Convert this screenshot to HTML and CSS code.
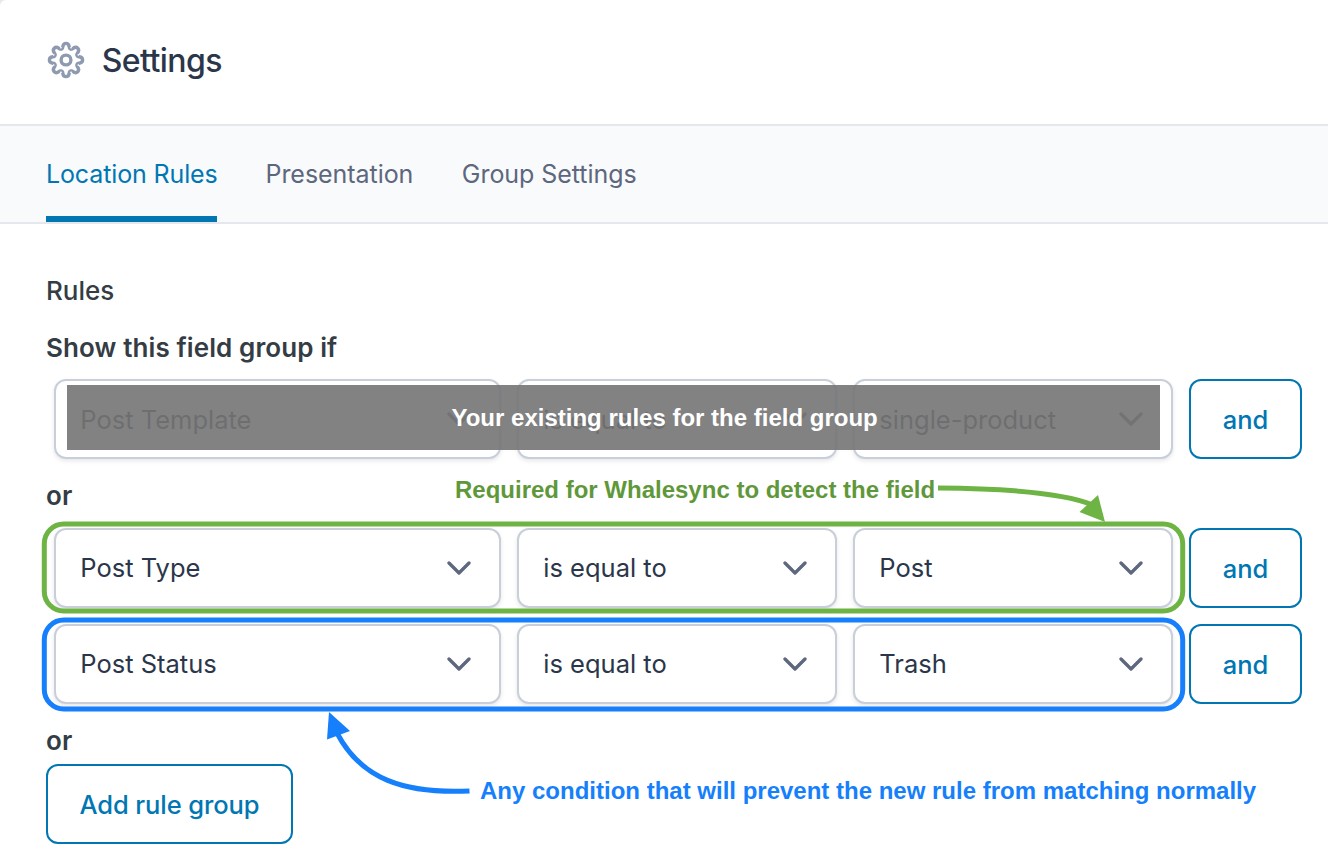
FILE: index.html
```
<!DOCTYPE html>
<html lang="en">
<head>
<meta charset="utf-8">
<title>Settings</title>
<link rel="stylesheet" href="styles.css">
</head>
<body>
<main class="panel">
  <header class="panel-head">
    <svg class="gear" viewBox="-20 -20 40 40" aria-hidden="true">
      <defs><path id="tooth" d="M-4.7 -11.35C-3.9 -11 -3.4 -11.8 -3.2 -13.2C-2.9 -15.4 -1.8 -16.6 0 -16.6C1.8 -16.6 2.9 -15.4 3.2 -13.2C3.4 -11.800 3.9 -11 4.7 -11.35"/></defs>
      <use href="#tooth"/><use href="#tooth" transform="rotate(45)"/><use href="#tooth" transform="rotate(90)"/><use href="#tooth" transform="rotate(135)"/><use href="#tooth" transform="rotate(180)"/><use href="#tooth" transform="rotate(225)"/><use href="#tooth" transform="rotate(270)"/><use href="#tooth" transform="rotate(315)"/>
      <circle r="4.9"/>
    </svg>
    <h1 class="title">Settings</h1>
  </header>
  <nav class="tabs">
    <a class="tab tab-active">Location Rules</a>
    <a class="tab">Presentation</a>
    <a class="tab">Group Settings</a>
  </nav>
  <section class="rules">
    <h2 class="label">Rules</h2>
    <h3 class="subhead">Show this field group if</h3>
    <div class="rule rule-covered">
      <div class="select"><span>Post Template</span><svg class="chev" viewBox="0 0 24 14"><path d="M2 2l10 10L22 2"/></svg></div>
      <div class="select"><span>is equal to</span><svg class="chev" viewBox="0 0 24 14"><path d="M2 2l10 10L22 2"/></svg></div>
      <div class="select"><span>single-product</span><svg class="chev" viewBox="0 0 24 14"><path d="M2 2l10 10L22 2"/></svg></div>
      <button class="btn">and</button>
      <div class="cover"><span class="cover-text">Your existing rules for the field group</span></div>
    </div>
    <h3 class="or">or</h3>
    <div class="rule">
      <div class="select"><span>Post Type</span><svg class="chev" viewBox="0 0 24 14"><path d="M2 2l10 10L22 2"/></svg></div>
      <div class="select"><span>is equal to</span><svg class="chev" viewBox="0 0 24 14"><path d="M2 2l10 10L22 2"/></svg></div>
      <div class="select"><span>Post</span><svg class="chev" viewBox="0 0 24 14"><path d="M2 2l10 10L22 2"/></svg></div>
      <button class="btn">and</button>
    </div>
    <div class="rule rule-next">
      <div class="select"><span>Post Status</span><svg class="chev" viewBox="0 0 24 14"><path d="M2 2l10 10L22 2"/></svg></div>
      <div class="select"><span>is equal to</span><svg class="chev" viewBox="0 0 24 14"><path d="M2 2l10 10L22 2"/></svg></div>
      <div class="select"><span>Trash</span><svg class="chev" viewBox="0 0 24 14"><path d="M2 2l10 10L22 2"/></svg></div>
      <button class="btn">and</button>
    </div>
    <h3 class="or or-last">or</h3>
    <button class="btn add">Add rule group</button>
  </section>
  <svg class="markup" viewBox="0 0 1328 856" aria-hidden="true">
    <rect class="line-green" x="44.300" y="524" width="1138.400" height="87" rx="19.500"/>
    <rect class="line-blue" x="44.300" y="620" width="1138.400" height="89" rx="19.500"/>
    <path class="line-green" d="M938 488C1010 488.500 1064 493 1093 505"/>
    <path class="head-green" d="M1098 495L1105 522L1079.500 512Z"/>
    <path class="line-blue" d="M469.500 791C404 794 361 779 337 733"/>
    <path class="head-blue" d="M329 712L350 731L327 739.500Z"/>
  </svg>
  <p class="note note-green">Required for Whalesync to detect the field</p>
  <p class="note note-blue">Any condition that will prevent the new rule from matching normally</p>
</main>
</body>
</html>
```
FILE: styles.css
```
* { box-sizing: border-box; }
html { background: #e8e8ea; }
body { margin: 0; font-family: Inter, sans-serif; font-size: 25.5px; color: #343c44; }
h1, h2, h3, p { margin: 0; }
.panel { position: relative; width: 1328px; height: 856px; overflow: hidden; background: #fff; border-top-left-radius: 6px; }
.panel-head { height: 126px; display: flex; align-items: center; padding: 0 0 5px 45.5px; gap: 16.2px; border-bottom: 2px solid #e5e7ec; }
.gear { width: 40px; height: 40px; fill: none; stroke: #8e9ab0; stroke-width: 3.4; }
.title { padding-top: 2px; font-size: 32px; font-weight: 450; line-height: 40px; color: #2b364a; letter-spacing: -0.55px; }
.tabs { height: 98px; display: flex; gap: 48.5px; padding-left: 46px; background: #f9fafb; border-bottom: 2px solid #e5e7ec; }
.tab { height: 96px; line-height: 97px; color: #5d677d; font-size: 25px; letter-spacing: -0.05px; white-space: nowrap; }
.tab-active { color: #0077b3; border-bottom: 6px solid #0077b3; width: 171px; letter-spacing: -0.13px; }
.rules { display: flex; flex-direction: column; align-items: flex-start; padding: 49px 0 0 46px; }
.label { font-size: 26px; font-weight: 500; line-height: 36px; }
.subhead, .or { font-size: 26px; font-weight: 600; line-height: 36px; letter-spacing: 0.1px; }
.subhead { margin: 21px 0 13px; }
.rule { position: relative; display: grid; grid-template-columns: 447px 320px 320px 113px; gap: 16px; height: 80px; padding-left: 8px; }
.select { display: flex; align-items: center; justify-content: space-between; padding: 0 28px 0 24.3px; border: 2px solid #c8cfda; border-radius: 12px; background: #fff; color: #2b364a; box-shadow: 0 2px 4px rgba(16, 24, 40, .1); white-space: nowrap; }
.select span { padding-bottom: 2px; }
.rule-covered .select span { padding-bottom: 0; }
.chev { width: 24px; height: 14px; fill: none; stroke: #5d677d; stroke-width: 3.3; stroke-linecap: round; stroke-linejoin: round; }
.btn { height: 80px; padding: 1px 0 0; font: 450 25.5px Inter, sans-serif; letter-spacing: -0.1px; color: #0077b3; background: #fff; border: 2px solid #0077b3; border-radius: 12px; text-align: center; white-space: nowrap; }
.or { margin: 19px 0 14px; }
.rule-next { margin-top: 16px; }
.or-last { margin: 19px 0 5px; }
.add { width: 247px; }
.cover { position: absolute; left: 21.3px; top: 6px; width: 1093px; height: 65px; padding: 19px 0 0 384.2px; background: rgba(116, 116, 116, .9); }
.cover-text, .note { font-family: "Liberation Sans", sans-serif; font-weight: 700; font-size: 24px; line-height: 28px; white-space: nowrap; }
.cover-text { display: block; color: #fff; }
.markup { position: absolute; left: 0; top: 0; width: 1328px; height: 856px; fill: none; pointer-events: none; }
.line-green { stroke: #6eb444; stroke-width: 5; }
.head-green { fill: #6eb444; }
.line-blue { stroke: #167ffc; stroke-width: 5; }
.head-blue { fill: #167ffc; }
.note { position: absolute; }
.note-green { left: 455px; top: 476px; color: #5f983a; }
.note-blue { left: 480px; top: 777px; color: #167ffc; }
```
